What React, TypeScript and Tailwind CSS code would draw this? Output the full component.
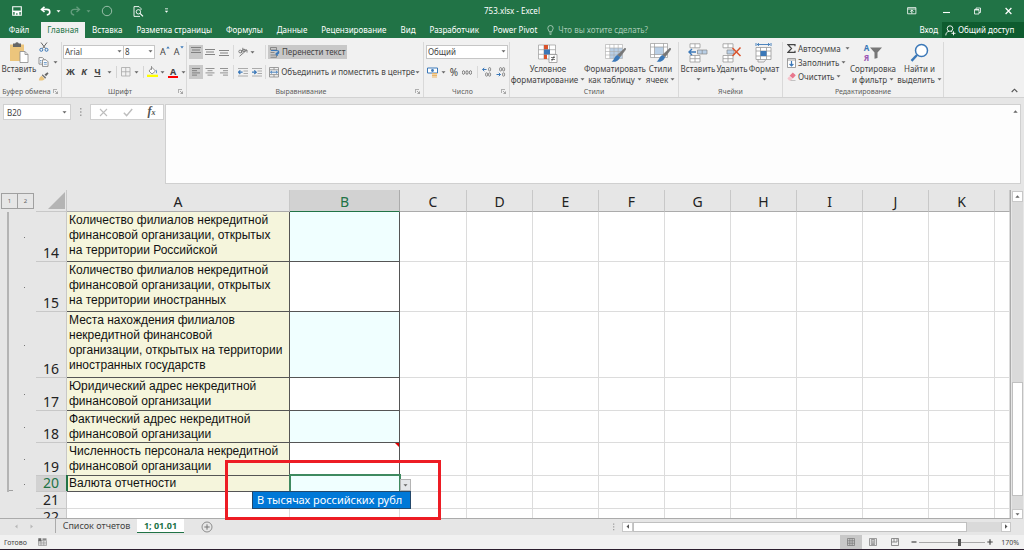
import React from "react";

type Kids = { children?: React.ReactNode };

function Svg({ w, h, className = "", children }: Kids & { w: number; h: number; className?: string }) {
  return (
    <svg width={w} height={h} viewBox={`0 0 ${w} ${h}`} fill="none" aria-hidden="true" className={`shrink-0 ${className}`}>
      {children}
    </svg>
  );
}

function Caret({ className = "text-[#666]" }: { className?: string }) {
  return (
    <Svg w={5} h={3} className={className}>
      <path d="M0.5 0.3h4L2.5 2.6z" fill="currentColor" />
    </Svg>
  );
}

/* ---------- Title bar ---------- */

function TitleBar() {
  return (
    <header className="grid h-[22px] shrink-0 grid-cols-[1fr_auto_1fr] items-center bg-[#217346] text-white">
      <div className="flex items-center pl-[12px]">
        <button aria-label="Сохранить" className="mr-[18px]">
          <Svg w={10} h={10}>
            <path d="M0.7 0.7h8.6v8.6H0.7z" stroke="#fff" strokeWidth="1.1" />
            <path d="M0.7 4.6h8.6v1.4H0.7z" fill="#fff" />
            <path d="M2.6 6h4.8v3.3H2.6z" fill="#fff" />
            <path d="M4.2 7.2h1.3v1.6H4.2z" fill="#217346" />
          </Svg>
        </button>
        <button aria-label="Отменить" className="mr-[4px]">
          <Svg w={12} h={10}>
            <path d="M4.5 0.8L1.5 3.4l3 2.6" stroke="#fff" strokeWidth="1.6" />
            <path d="M1.8 3.4h5c4 0 4 5 0 5.6" stroke="#fff" strokeWidth="1.6" />
          </Svg>
        </button>
        <Caret className="mr-[9px] text-white" />
        <button aria-label="Вернуть" className="mr-[5px] opacity-30">
          <Svg w={11} h={10}>
            <path d="M6.5 0.8l3 2.6-3 2.6" stroke="#fff" strokeWidth="1.3" />
            <path d="M9.2 3.4h-5c-4 0-4 5 0 5.6" stroke="#fff" strokeWidth="1.3" />
          </Svg>
        </button>
        <Caret className="mr-[10px] text-white/30" />
        <button aria-label="Фигура" className="mr-[20px]">
          <Svg w={12} h={12}>
            <circle cx="6" cy="6" r="4.7" stroke="#b5d0c0" strokeWidth="0.8" />
          </Svg>
        </button>
        <button aria-label="Предварительный просмотр" className="mr-[24px]">
          <Svg w={11} h={11}>
            <path d="M8 4V2.6L6 0.6H1v9.8h6" stroke="#fff" strokeWidth="0.9" />
            <circle cx="5.4" cy="5.8" r="2.2" stroke="#fff" strokeWidth="0.9" />
            <path d="M7 7.4l3 3" stroke="#fff" strokeWidth="1.3" />
          </Svg>
        </button>
        <button aria-label="Настройка панели" className="-ml-[4px]">
          <Svg w={5} h={6}>
            <path d="M1 0.8h3" stroke="#fff" strokeWidth="0.8" />
            <path d="M0.8 2.8h3.400L2.5 4.8z" fill="#fff" />
          </Svg>
        </button>
      </div>
      <h1 className="text-[8px] leading-[12px]">753.xlsx - Excel</h1>
      <div className="flex items-center justify-end pr-[12px]">
        <button aria-label="Параметры ленты" className="mr-[26px]">
          <Svg w={10} h={8}>
            <path d="M0.6 0.6h8.3v6.2H0.6zM0.6 2h8.3" stroke="#fff" strokeWidth="0.8" />
            <path d="M4.8 6.5V3M3.2 4.6L4.8 3l1.6 1.6" stroke="#fff" strokeWidth="0.9" />
          </Svg>
        </button>
        <button aria-label="Свернуть" className="mr-[24px]">
          <Svg w={7} h={8}>
            <path d="M0 5.500h7" stroke="#fff" strokeWidth="1.1" />
          </Svg>
        </button>
        <button aria-label="Восстановить" className="mr-[24px]">
          <Svg w={7} h={8}>
            <path d="M0.5 2.5h4.5v4.5H0.5zM2 2.5V1h4.5v4.5H5M0.5 3h4.5" stroke="#fff" strokeWidth="0.8" />
          </Svg>
        </button>
        <button aria-label="Закрыть">
          <Svg w={7} h={8}>
            <path d="M0.6 1l5.8 6M6.4 1L0.6 7" stroke="#fff" strokeWidth="1.2" />
          </Svg>
        </button>
      </div>
    </header>
  );
}

/* ---------- Ribbon tabs ---------- */

const TABS = ["Вставка", "Разметка страницы", "Формулы", "Данные", "Рецензирование", "Вид", "Разработчик", "Power Pivot"];

function RibbonTabs() {
  return (
    <nav className="flex h-[16px] shrink-0 items-stretch whitespace-nowrap bg-[#217346] text-[8px] leading-[16px] text-white">
      <button className="w-[41px] pr-[3px] text-center">Файл</button>
      <button className="w-[44px] bg-[#f1f1f1] text-center text-[#217346]">Главная</button>
      {TABS.map((t) => (
        <button key={t} className="px-[7px]">
          {t}
        </button>
      ))}
      <button className="ml-[3px] flex items-center gap-[4px] text-[#a5c9b4]">
        <Svg w={7} h={10}>
          <path d="M2.2 6.7C2 5.3 0.8 4.8 0.8 3.2a2.7 2.7 0 0 1 5.4 0c0 1.6-1.2 2.1-1.4 3.5zM2.3 8h2.4M2.6 9.3h1.8" stroke="#bcd8c7" strokeWidth="0.8" />
        </Svg>
        Что вы хотите сделать?
      </button>
      <button className="ml-auto mr-[4px]">Вход</button>
      <button className="flex w-[82px] items-center gap-[2px] bg-[#0e5c2f] pl-[3px]">
        <Svg w={11} h={11}>
          <circle cx="5" cy="3.6" r="2.8" stroke="#fff" strokeWidth="0.9" />
          <path d="M0.8 10.4c0-2.4 1.4-3.8 3.2-4.1M6.2 6.3l1 0.5M8.5 6.3v4M6.5 8.3h4" stroke="#fff" strokeWidth="0.9" />
        </Svg>
        Общий доступ
      </button>
    </nav>
  );
}

/* ---------- Ribbon ---------- */

function Group({ label, className, launcher = false, children }: Kids & { label: string; className: string; launcher?: boolean }) {
  return (
    <section className={`flex shrink-0 flex-col border-r border-[#d9d9d9] ${className}`}>
      <div className="h-[44px]">{children}</div>
      <div className="flex h-[11px] items-center">
        <h2 className="flex-1 whitespace-nowrap text-center text-[7px] leading-[11px] text-[#605e5c]">{label}</h2>
        {launcher && (
          <button aria-label={`Параметры: ${label}`} className="mr-[3px]">
            <Svg w={5} h={5}>
              <path d="M0.4 4V0.4H4M2 2l2.4 2.4M4.5 2.4v2.1H2.4" stroke="#777" strokeWidth="0.6" />
            </Svg>
          </button>
        )}
      </div>
    </section>
  );
}

function BigButton({ icon, lines, className, caretBelow = false }: { icon: React.ReactNode; lines: string[]; className: string; caretBelow?: boolean }) {
  return (
    <button className={`flex shrink-0 flex-col items-center whitespace-nowrap text-[8px] leading-[11px] text-[#444] ${className}`}>
      <span className="flex h-[21px] items-center">{icon}</span>
      {lines.map((l, i) => (
        <span key={l} className="flex items-center gap-[2px]">
          {l}
          {!caretBelow && i === lines.length - 1 && <Caret />}
        </span>
      ))}
      {caretBelow && <Caret className="mt-[4px] text-[#666]" />}
    </button>
  );
}

function AlignIcon({ widths, top = 1 }: { widths: [number, number, number]; top?: number }) {
  return (
    <Svg w={10} h={10}>
      {widths.map((n, i) => (
        <path key={i} d={`M${(10 - n) / 2} ${top + 0.5 + i * 2.5}h${n}`} stroke="#777" strokeWidth="0.9" />
      ))}
    </Svg>
  );
}

function IndentIcon({ flip = false }: { flip?: boolean }) {
  return (
    <Svg w={10} h={9}>
      <path d="M0 0.5h10M5.5 3h4.5M5.5 5.5h4.5M0 8h10" stroke="#999" strokeWidth="0.8" />
      <path d={flip ? "M0 4.2h4M2.3 2.4l1.9 1.8L2.3 6" : "M0.6 4.2h4M2.3 2.4L0.5 4.2 2.3 6"} stroke="#3b78b8" strokeWidth="1.3" />
    </Svg>
  );
}

function DecimalIcon({ up = false }: { up?: boolean }) {
  return (
    <Svg w={10} h={10}>
      <path d={up ? "M0.5 2.5h4M2.3 0.8L0.6 2.5l1.7 1.7" : "M0.5 7.5h4M2.8 5.8l1.7 1.7-1.7 1.7"} stroke="#3b78b8" strokeWidth="1" />
      <rect x="6.6" y="0.6" width="2" height="3.4" rx="1" stroke="#666" strokeWidth="0.7" />
      <rect x="6.6" y="5.8" width="2" height="3.4" rx="1" stroke="#666" strokeWidth="0.7" />
      {up ? <rect x="3.6" y="5.8" width="2" height="3.4" rx="1" stroke="#666" strokeWidth="0.7" /> : <rect x="3.6" y="0.6" width="2" height="3.4" rx="1" stroke="#666" strokeWidth="0.7" />}
    </Svg>
  );
}

function Drop({ label, value, className }: { label: string; value: string; className: string }) {
  return (
    <div className={`relative shrink-0 ${className}`}>
      <select aria-label={label} defaultValue={value} className="block h-[14px] w-full appearance-none border border-[#c6c6c6] bg-white pl-[1px] text-[8px] leading-[12px] text-[#444]">
        <option>{value}</option>
      </select>
      <span className="pointer-events-none absolute right-[2px] top-[5px]">
        <Caret />
      </span>
    </div>
  );
}

function Brush() {
  return (
    <>
      <path d="M20 5l1 1-6 8-2.5-2z" fill="#777" stroke="#777" strokeWidth="0.6" />
      <path d="M12.3 12l2.8 2.2c-1 3.6-4.6 5-8.6 4.6 2.6-1.4 2.6-5.4 5.8-6.800z" fill="#3b78b8" />
    </>
  );
}

function Ribbon() {
  return (
    <div className="flex h-[60px] shrink-0 overflow-hidden border-b border-[#d2d2d2] bg-[#f1f1f1] pt-[4px] text-[8px] text-[#444]">
      <Group label="Буфер обмена" className="w-[62px]" launcher>
        <div className="flex">
          <BigButton
            className="w-[38px]"
            caretBelow
            lines={["Вставить"]}
            icon={
              <Svg w={20} h={21}>
                <path d="M1 2.5h14V19H1z" fill="#ecc57c" />
                <path d="M4 1.500h2.200a2 2 0 0 1 3.600 0H12V5H4z" fill="#666" />
                <path d="M11 9.500h5l3 3v8h-8z" fill="#fff" stroke="#8a8a8a" strokeWidth="0.8" />
                <path d="M16 9.500v3h3" stroke="#8a8a8a" strokeWidth="0.8" />
              </Svg>
            }
          />
          <div className="flex flex-col gap-[5px]">
            <button aria-label="Вырезать" className="pl-[1px]">
              <Svg w={10} h={10}>
                <path d="M2 0.500l4.500 6M8 0.500l-4.500 6" stroke="#666" strokeWidth="1" />
                <circle cx="2.300" cy="7.800" r="1.500" stroke="#3b78b8" strokeWidth="1" />
                <circle cx="7.500" cy="7.800" r="1.500" stroke="#3b78b8" strokeWidth="1" />
              </Svg>
            </button>
            <button aria-label="Копировать" className="flex items-center gap-[4px]">
              <Svg w={11} h={10}>
                <path d="M1 0.600h3.500l1.500 1.500v5H1z" fill="#fff" stroke="#777" strokeWidth="0.800" />
                <path d="M4.500 2.800h3.500l2 2v4.600H4.500z" fill="#fff" stroke="#777" strokeWidth="0.800" />
                <path d="M5.800 5.500h3M5.800 7.200h3M2 3.500h1.500M2 5.200h1.500" stroke="#3b78b8" strokeWidth="0.700" />
              </Svg>
              <Caret />
            </button>
            <button aria-label="Формат по образцу">
              <Svg w={11} h={9}>
                <path d="M6.500 2.500L9.500 0.300l1 1.200-2.500 2.700z" fill="#666" />
                <path d="M4.500 2.300l3.700 3.200-1 1.200L3.800 3.500z" fill="#777" />
                <path d="M3.500 3.800l3.200 3.200C5.500 8.600 3 8.700 0.800 8.300 1 6.500 2 5 3.500 3.800z" fill="#ecc57c" />
              </Svg>
            </button>
          </div>
        </div>
      </Group>

      <Group label="Шрифт" className="w-[125px]" launcher>
        <div className="flex h-[20px] items-center pl-[1px]">
          <Drop label="Шрифт" value="Arial" className="w-[61px]" />
          <Drop label="Размер шрифта" value="8" className="-ml-px w-[32px]" />
          <button aria-label="Увеличить шрифт" className="ml-[5px] flex text-[9px] leading-[14px]">
            А
            <Svg w={4} h={3} className="mt-[1px]">
              <path d="M0.300 2.500h3.400L2 0.300z" fill="#3b78b8" />
            </Svg>
          </button>
          <button aria-label="Уменьшить шрифт" className="ml-[4px] flex text-[9px] leading-[14px]">
            А
            <Svg w={4} h={3} className="mt-[1px]">
              <path d="M0.300 0.300h3.400L2 2.500z" fill="#3b78b8" />
            </Svg>
          </button>
        </div>
        <div className="flex h-[20px] items-center pl-[4px] text-[9px] font-bold leading-[14px]">
          <button className="w-[9px]">Ж</button>
          <button className="ml-[5px] w-[8px] italic">К</button>
          <button className="ml-[6px] w-[7px] underline">Ч</button>
          <Caret className="ml-[6px] text-[#666]" />
          <span className="ml-[4px] h-[12px] w-px bg-[#d4d4d4]" />
          <button aria-label="Границы" className="ml-[4px]">
            <Svg w={10} h={10}>
              <path d="M0.500 0.500h8.500v8.500H0.500zM4.750 0.500V9M0.500 4.750H9" stroke="#a8a8a8" strokeWidth="0.800" />
            </Svg>
          </button>
          <Caret className="ml-[3px] text-[#666]" />
          <span className="ml-[4px] h-[12px] w-px bg-[#d4d4d4]" />
          <button aria-label="Цвет заливки" className="ml-[3px]">
            <Svg w={11} h={12}>
              <path d="M0 8.700h11V11H0z" fill="#ffff00" />
              <path d="M5 1.500l3.500 3.500-3.500 3-3-3z" fill="#fff" stroke="#777" strokeWidth="0.800" />
              <path d="M4.500 0v4" stroke="#777" strokeWidth="0.700" />
              <path d="M9 3.500c1.300 1.600 1.300 3.500 0.300 4z" fill="#3b78b8" />
            </Svg>
          </button>
          <Caret className="ml-[2px] text-[#666]" />
          <button aria-label="Цвет текста" className="ml-[3px] flex flex-col items-center">
            <span className="h-[9px] text-[9px] leading-[9px]">А</span>
            <span className="h-[2px] w-[10px] bg-[#ff0000]" />
          </button>
          <Caret className="ml-[3px] text-[#666]" />
        </div>
      </Group>

      <Group label="Выравнивание" className="w-[237px]" launcher>
        <div className="flex h-[20px] items-center pl-[2px]">
          <button aria-label="По верхнему краю" className="bg-[#c8c8c8] px-[2px] py-[2px]">
            <AlignIcon widths={[10, 8, 10]} top={0} />
          </button>
          <button aria-label="По середине" className="ml-[2px]">
            <AlignIcon widths={[10, 8, 10]} top={2} />
          </button>
          <button aria-label="По нижнему краю" className="ml-[4px]">
            <AlignIcon widths={[10, 8, 10]} top={3} />
          </button>
          <span className="ml-[4px] h-[14px] w-px bg-[#d9d9d9]" />
          <button aria-label="Ориентация" className="ml-[4px] flex items-center gap-[2px]">
            <Svg w={10} h={10}>
              <circle cx="2.200" cy="4.500" r="1.400" stroke="#666" strokeWidth="0.800" />
              <path d="M3.800 3v3.200M4.800 0.800v3.500M1.500 9.300L8.800 3M6.200 3h2.800v2.600" stroke="#666" strokeWidth="0.800" />
              <circle cx="6" cy="3.400" r="1.200" stroke="#666" strokeWidth="0.800" />
            </Svg>
            <Caret />
          </button>
          <span className="ml-[10px] h-[14px] w-px bg-[#d9d9d9]" />
          <button className="ml-[2px] flex h-[14px] items-center gap-[2px] whitespace-nowrap bg-[#c8c8c8] pl-[2px] pr-[2px] leading-[14px]">
            <Svg w={10} h={11}>
              <path d="M0.500 0.500h6v2.500h-6zM0.500 8h6v2.300h-6M0.500 5.500h4" stroke="#777" strokeWidth="0.800" />
              <path d="M1 3.500h5.500c3 0 3 3.200 0 3.400M7.800 5.200L6 6.900l1.800 1.700" stroke="#3b78b8" strokeWidth="1.200" />
            </Svg>
            Перенести текст
          </button>
        </div>
        <div className="flex h-[20px] items-center pl-[2px]">
          <button aria-label="По левому краю" className="bg-[#c8c8c8] px-[2px] py-[2px]">
            <Svg w={10} h={10}>
              <path d="M1 1.500h8M1 3.700h5M1 5.900h8M1 8.100h5" stroke="#777" strokeWidth="0.900" />
            </Svg>
          </button>
          <button aria-label="По центру" className="ml-[2px]">
            <Svg w={10} h={10}>
              <path d="M0.500 1.500h9M2.500 3.700h5M0.500 5.900h9M2.500 8.100h5" stroke="#888" strokeWidth="0.900" />
            </Svg>
          </button>
          <button aria-label="По правому краю" className="ml-[4px]">
            <Svg w={10} h={10}>
              <path d="M1 1.500h8M4 3.700h5M1 5.900h8M4 8.100h5" stroke="#888" strokeWidth="0.900" />
            </Svg>
          </button>
          <span className="ml-[4px] h-[14px] w-px bg-[#d9d9d9]" />
          <button aria-label="Уменьшить отступ" className="ml-[4px]">
            <IndentIcon />
          </button>
          <button aria-label="Увеличить отступ" className="ml-[4px]">
            <IndentIcon flip />
          </button>
          <span className="ml-[3px] h-[14px] w-px bg-[#d9d9d9]" />
          <button className="ml-[4px] flex items-center gap-[2px] whitespace-nowrap leading-[14px]">
            <Svg w={10} h={11}>
              <path d="M0.500 0.500h9v9.500h-9zM0.500 2.800h9M0.500 7.600h9M5 0.500v2.300M5 7.600v2.400" stroke="#888" strokeWidth="0.800" />
              <path d="M1.500 5.200h7M3 3.900L1.500 5.200 3 6.500M7 3.900l1.500 1.300L7 6.500" stroke="#3b78b8" strokeWidth="0.900" />
            </Svg>
            Объединить и поместить в центре
          </button>
          <Caret className="ml-auto mr-[3px] text-[#666]" />
        </div>
      </Group>

      <Group label="Число" className="w-[86px]" launcher>
        <div className="flex h-[20px] items-center pl-[2px]">
          <Drop label="Числовой формат" value="Общий" className="w-[82px]" />
        </div>
        <div className="flex h-[20px] items-center pl-[3px] leading-[14px]">
          <button aria-label="Финансовый формат">
            <Svg w={11} h={11}>
              <path d="M0.500 1h10v5h-10z" fill="#fff" stroke="#3b78b8" strokeWidth="1" />
              <circle cx="5.500" cy="3.500" r="1.400" fill="#3b78b8" />
              <path d="M5 6h5v1.200H5zM5 7.700h5v1.200H5zM5 9.400h5v1.200H5z" fill="#ecb667" />
            </Svg>
          </button>
          <Caret className="ml-[3px] text-[#666]" />
          <button className="ml-[3px] w-[10px] text-[10px]">%</button>
          <button aria-label="Формат с разделителями" className="ml-[3px]">
            <Svg w={10} h={5}>
              {[1.5, 5, 8.5].map((x) => (
                <ellipse key={x} cx={x} cy="2.500" rx="1.100" ry="1.900" stroke="#666" strokeWidth="0.800" />
              ))}
            </Svg>
          </button>
          <span className="ml-[5px] h-[12px] w-px bg-[#d9d9d9]" />
          <button aria-label="Увеличить разрядность" className="ml-[4px]">
            <DecimalIcon up />
          </button>
          <button aria-label="Уменьшить разрядность" className="ml-[4px]">
            <DecimalIcon />
          </button>
        </div>
      </Group>

      <Group label="Стили" className="w-[169px]">
        <div className="flex">
          <BigButton
            className="w-[76px]"
            lines={["Условное", "форматирование"]}
            icon={
              <Svg w={20} h={20}>
                <path d="M0.500 2h17v14h-17zM0.500 6.700h17M0.500 11.300h17M6 2v14M11.500 2v14" stroke="#999" strokeWidth="0.700" fill="#fff" />
                <path d="M6 2h4v4.500H6zM6 11.500h3V16H6z" fill="#d9532c" />
                <path d="M6 6.500h6v5H6z" fill="#3b78b8" />
                <path d="M11 11.500h8v8h-8z" fill="#fff" stroke="#888" strokeWidth="0.700" />
                <path d="M13 14.500h4M13 16.500h4M16.300 12.800l-2.600 5.400" stroke="#444" strokeWidth="0.700" />
              </Svg>
            }
          />
          <BigButton
            className="w-[58px]"
            lines={["Форматировать", "как таблицу"]}
            icon={
              <Svg w={21} h={20}>
                <path d="M0.500 1.500h17v14h-17z" fill="#fff" />
                <path d="M5 5h12.500v10.500H5z" fill="#b9cfe6" />
                <path d="M0.500 1.500h17v14h-17zM0.500 5h17M0.500 8.500h17M0.500 12h17M4.700 1.500v14M9 1.500v14M13.200 1.500v14" stroke="#aaa" strokeWidth="0.600" />
                <Brush />
              </Svg>
            }
          />
          <BigButton
            className="w-[33px]"
            lines={["Стили", "ячеек"]}
            icon={
              <Svg w={21} h={20}>
                <path d="M0.500 0.500h17v14h-17z" fill="#fff" />
                <path d="M4.500 4h9v7.500h-9z" fill="#b9cfe6" />
                <path d="M0.500 0.500h17v14h-17zM0.500 4h17M0.500 11.500h17M4.500 0.500v14M13.500 0.500v14" stroke="#999" strokeWidth="0.700" />
                <Brush />
              </Svg>
            }
          />
        </div>
      </Group>

      <Group label="Ячейки" className="w-[104px]">
        <div className="flex pl-[1px]">
          <BigButton
            className="w-[36px]"
            caretBelow
            lines={["Вставить"]}
            icon={
              <Svg w={20} h={20}>
                <path d="M2 0.800h10v4H2zM7 0.800v4M2 12.500h10v6.500H2zM7 12.500V19M2 15.700h10" stroke="#999" strokeWidth="0.800" fill="#fff" />
                <path d="M9.500 7h9.500v4H9.500zM14.200 7v4" stroke="#888" strokeWidth="0.700" fill="#b9cfe6" />
                <path d="M1 9h7M4 6L1 9l3 3" stroke="#3b78b8" strokeWidth="1.400" />
              </Svg>
            }
          />
          <BigButton
            className="w-[32px]"
            caretBelow
            lines={["Удалить"]}
            icon={
              <Svg w={20} h={20}>
                <path d="M1 0.800h10v4H1zM6 0.800v4M1 12.500h10v6.500H1zM6 12.500V19M1 15.700h10" stroke="#999" strokeWidth="0.800" fill="#fff" />
                <path d="M5 7h7v4H5z" stroke="#888" strokeWidth="0.700" fill="#b9cfe6" />
                <path d="M10.500 5l8 8M18.500 4.500l-8 8.500" stroke="#d9532c" strokeWidth="1.500" />
              </Svg>
            }
          />
          <BigButton
            className="w-[32px]"
            caretBelow
            lines={["Формат"]}
            icon={
              <Svg w={18} h={20}>
                <path d="M1 4.500h15v12H1zM1 8h15M1 13h15M5.500 4.500v12M11.500 4.500v12" stroke="#999" strokeWidth="0.800" fill="#fff" />
                <path d="M5.500 8h6v5h-6z" fill="#3b78b8" />
                <path d="M1 0v3M16 0v3M2 1.500h13M4 0.200L2.300 1.500 4 2.800M13 0.200l1.700 1.300L13 2.800" stroke="#3b78b8" strokeWidth="0.900" />
                <path d="M3 16.500v2.500h6l2-2.500" stroke="#999" strokeWidth="0.800" />
              </Svg>
            }
          />
        </div>
      </Group>

      <Group label="Редактирование" className="w-[161px]">
        <div className="flex">
          <div className="flex w-[65px] flex-col gap-[1px] whitespace-nowrap pl-[4px] leading-[12px]">
            <button className="flex h-[13px] items-center gap-[2px]">
              <Svg w={9} h={9}>
                <path d="M8 2.200V0.700H1L4.500 4.500 1 8.300h7V6.800" stroke="#444" strokeWidth="1.200" />
              </Svg>
              Автосумма
              <Caret className="ml-[2px] text-[#666]" />
            </button>
            <button className="flex h-[13px] items-center gap-[2px]">
              <Svg w={9} h={10}>
                <path d="M0.500 0.500h8v9h-8zM0.500 2h8" stroke="#888" strokeWidth="0.800" fill="#fff" />
                <path d="M4.500 3v5M2.600 6l1.900 2 1.900-2" stroke="#3b78b8" strokeWidth="1.200" />
              </Svg>
              Заполнить
              <Caret />
            </button>
            <button className="flex h-[13px] items-center gap-[2px]">
              <Svg w={9} h={9}>
                <path d="M5.800 0.500L8.800 3.200 5.800 6.500 2.600 3.800z" fill="#e8778c" />
                <path d="M2.300 4.200l3.100 2.700-1.500 1.500H2L0.400 6.600z" fill="#f6c3cc" />
                <path d="M3.500 8.600h5" stroke="#999" strokeWidth="0.600" />
              </Svg>
              Очистить
              <Caret />
            </button>
          </div>
          <BigButton
            className="w-[50px]"
            lines={["Сортировка", "и фильтр"]}
            icon={
              <span className="flex items-center">
                <span className="flex flex-col text-[8px] font-bold leading-[10px]">
                  <span className="text-[#3b78b8]">А</span>
                  <span className="text-[#9a57b5]">Я</span>
                </span>
                <Svg w={12} h={12} className="ml-[1px]">
                  <path d="M0 0.500h12L7.500 5.500V11L4.500 11.700V5.500z" fill="#777" />
                </Svg>
              </span>
            }
          />
          <BigButton
            className="w-[43px]"
            lines={["Найти и", "выделить"]}
            icon={
              <Svg w={19} h={20}>
                <circle cx="11.500" cy="7.500" r="6" fill="#fff" stroke="#3b78b8" strokeWidth="1.500" />
                <path d="M7 12L1.500 17.800" stroke="#3b78b8" strokeWidth="2.400" />
              </Svg>
            }
          />
        </div>
      </Group>
      <button aria-label="Свернуть ленту" className="mb-[4px] ml-auto mr-[6px] self-end">
        <Svg w={7} h={5}>
          <path d="M0.700 4L3.500 1.200 6.300 4" stroke="#555" strokeWidth="1.100" />
        </Svg>
      </button>
    </div>
  );
}

/* ---------- Formula bar ---------- */

function FormulaBar() {
  return (
    <div className="flex h-[92px] shrink-0 items-start bg-[#e6e6e6] pb-[6px] pl-[3px] pr-[3px] pt-[6px]">
      <div className="relative w-[68px]">
        <input aria-label="Имя ячейки" defaultValue="B20" className="block h-[16px] w-full border border-[#d0d0d0] bg-white pl-[3px] text-[8px] leading-[14px] text-[#444]" />
        <span className="pointer-events-none absolute right-[4px] top-[7px]">
          <Caret />
        </span>
      </div>
      <Svg w={2} h={16} className="ml-[9px]">
        <path d="M0 4h1.500v1.500H0zM0 7.300h1.500v1.500H0zM0 10.600h1.500v1.500H0z" fill="#a0a0a0" />
      </Svg>
      <div className="ml-[8px] flex h-[16px] w-[74px] items-center justify-around border border-[#d0d0d0] bg-white">
        <button aria-label="Отмена">
          <Svg w={9} h={9}>
            <path d="M1 1l7 7M8 1L1 8" stroke="#bdbdbd" strokeWidth="1.100" />
          </Svg>
        </button>
        <button aria-label="Ввод">
          <Svg w={10} h={9}>
            <path d="M0.800 4.800l2.800 2.800L9.200 1" stroke="#bdbdbd" strokeWidth="1.400" />
          </Svg>
        </button>
        <button className="font-['Liberation_Serif',serif] text-[12px] font-bold italic leading-[13px] text-[#555]">
          f<span className="text-[8px]">x</span>
        </button>
      </div>
      <div className="relative ml-[1px] h-full flex-1">
        <textarea aria-label="Строка формул" className="block h-full w-full resize-none border border-[#d0d0d0] bg-[#fdfdfd]" />
        <Svg w={5} h={3} className="absolute right-[3px] top-[6px]">
          <path d="M0.300 2.800h4.400L2.500 0.300z" fill="#666" />
        </Svg>
      </div>
    </div>
  );
}

/* ---------- Sheet ---------- */

const COLUMNS = ["A", "B", "C", "D", "E", "F", "G", "H", "I", "J", "K", ""];

type Row = { n: number; h: string; lines?: string[]; tint?: boolean };

const ROWS: Row[] = [
  { n: 14, h: "h-[50px]", tint: true, lines: ["Количество филиалов некредитной", "финансовой организации, открытых", "на территории Российской"] },
  { n: 15, h: "h-[50px]", lines: ["Количество филиалов некредитной", "финансовой организации, открытых", "на территории иностранных"] },
  { n: 16, h: "h-[66px]", tint: true, lines: ["Места нахождения филиалов", "некредитной финансовой", "организации, открытых на территории", "иностранных государств"] },
  { n: 17, h: "h-[33px]", lines: ["Юридический адрес некредитной", "финансовой организации"] },
  { n: 18, h: "h-[32px]", tint: true, lines: ["Фактический адрес некредитной", "финансовой организации"] },
  { n: 19, h: "h-[33px]", lines: ["Численность персонала некредитной", "финансовой организации"] },
  { n: 20, h: "h-[16px]", tint: true, lines: ["Валюта отчетности"] },
  { n: 21, h: "h-[17px]" },
  { n: 22, h: "h-[17px]" },
];

function SheetRow({ row }: { row: Row }) {
  const active = row.n === 20;
  const filled = Boolean(row.lines);
  return (
    <tr className={row.h}>
      <td className="bg-[#e6e6e6] p-0">
        {filled && (
          <div className={`ml-[7px] flex items-center border-l-2 border-[#b4b4b4] ${row.h}`}>
            <span className="ml-[15px] h-px w-px bg-[#777]" />
            {active && <span className="-ml-[16px] mb-px h-px w-[4px] self-end bg-[#a0a0a0]" />}
          </div>
        )}
      </td>
      <th
        scope="row"
        className={`border-b border-r border-[#c8c8c8] p-0 text-right align-bottom font-normal ${active ? "bg-[#d2d2d2] text-[#217346]" : "bg-[#e6e6e6] text-[#222]"}`}
      >
        <div className="h-[15px] pr-[7px] text-[14px] leading-[14px]">{row.n}</div>
      </th>
      <td className={`border-b border-r p-0 align-top ${filled ? "border-[#555] bg-[#f5f5dc]" : "border-[#dcdcdc]"}`}>
        {filled && (
          <div className={`overflow-hidden whitespace-nowrap pl-[2px] ${active ? "h-[15px]" : "pt-px"}`}>
            {row.lines!.map((l) => (
              <div key={l} className="font-['Liberation_Sans',Arial,sans-serif] text-[12px] leading-[15px] text-[#111]">
                {l}
              </div>
            ))}
          </div>
        )}
      </td>
      <td className={`border-b border-r p-0 ${filled ? "border-[#555]" : "border-[#dcdcdc]"} ${row.tint ? "bg-[#f0ffff]" : "bg-white"}`}>
        {row.n === 19 && (
          <Svg w={4} h={4} className="mb-[28px] ml-auto">
            <path d="M0 0h4v4z" fill="#e00000" />
          </Svg>
        )}
      </td>
      {COLUMNS.slice(2).map((c, i) => (
        <td key={c + i} className="border-b border-r border-[#dcdcdc] p-0" />
      ))}
    </tr>
  );
}

function Sheet() {
  return (
    <main className="relative flex min-h-0 flex-1 bg-[#e6e6e6]">
      <div className="min-w-0 flex-1 overflow-hidden border-b border-r border-[#ababab] bg-white">
        <table className="w-full table-fixed border-separate border-spacing-0">
          <colgroup>
            <col className="w-[36px]" />
            <col className="w-[31px]" />
            <col className="w-[223px]" />
            <col className="w-[110px]" />
            <col className="w-[67px]" />
            {COLUMNS.slice(3, 11).map((c) => (
              <col key={c} className="w-[66px]" />
            ))}
            <col />
          </colgroup>
          <thead>
            <tr className="h-[22px] bg-[#e6e6e6]">
              <td className="p-0">
                <div className="ml-[1px] flex w-[33px] border border-[#a0a0a0] text-[6px] leading-[14px] text-[#666]">
                  <button className="flex-1 border-r border-[#a0a0a0]">1</button>
                  <button className="flex-1">2</button>
                </div>
              </td>
              <td className="border-b border-r border-[#c8c8c8] p-0">
                <Svg w={17} h={17} className="ml-auto mr-[1px]">
                  <path d="M17 0v17H0z" fill="#b4b4b4" />
                </Svg>
              </td>
              {COLUMNS.map((c) => (
                <th
                  key={c}
                  scope="col"
                  className={`border-b border-r p-0 pt-[2px] text-center text-[14px] font-normal leading-[18px] ${
                    c === "B" ? "border-b-[#217346] border-r-[#ababab] bg-[#d2d2d2] text-[#217346]" : "border-b-[#ababab] border-r-[#c8c8c8] text-[#222]"
                  }`}
                >
                  {c}
                </th>
              ))}
            </tr>
          </thead>
          <tbody>
            {ROWS.map((r) => (
              <SheetRow key={r.n} row={r} />
            ))}
          </tbody>
        </table>
      </div>

      <div className="flex w-[13px] shrink-0 flex-col bg-[#e6e6e6] px-[1px] pt-[1px]">
        <button aria-label="Вверх" className="flex h-[11px] shrink-0 items-center justify-center border border-[#c8c8c8] bg-white">
          <Svg w={5} h={3}>
            <path d="M0.300 2.800h4.400L2.500 0.300z" fill="#666" />
          </Svg>
        </button>
        <div className="flex flex-1 flex-col bg-[#dadada]">
          <div className="flex-[181]" />
          <div className="flex-[113] border border-[#c0c0c0] bg-white" />
          <div className="flex-[13]" />
        </div>
        <button aria-label="Вниз" className="flex h-[10px] shrink-0 items-center justify-center border border-[#c8c8c8] bg-white">
          <Caret />
        </button>
      </div>

      {/* Selection outline, validation list and the highlight frame float over the grid */}
      <div className="pointer-events-none absolute left-[289px] top-[284px] h-[18px] w-[112px] border-2 border-b-0 border-[#3f8a60]" />
      <div className="absolute left-[66px] top-[285px] h-[16px] w-[2px] bg-[#217346]" />
      <button aria-label="Открыть список" className="absolute left-[400px] top-[289px] flex h-[12px] w-[11px] items-center justify-center border border-[#b4b4b4] bg-[#e4e6ea]">
        <Caret />
      </button>
      <ul role="listbox" className="absolute left-[252px] top-[301px] h-[18px] w-[159px] overflow-hidden border border-[#24486b] bg-[#0078d7] pl-[4px]">
        <li role="option" aria-selected="true" className="whitespace-nowrap text-[11px] leading-[16px] text-white">
          В тысячах российских рубл
        </li>
      </ul>
      <div className="pointer-events-none absolute left-[225px] top-[270px] z-10 h-[60px] w-[216px] border-[3px] border-[#ed1c24]" />
    </main>
  );
}

/* ---------- Sheet tabs and status bar ---------- */

function SheetTabs() {
  return (
    <div className="flex h-[16px] shrink-0 items-start bg-[#e6e6e6] text-[9px] leading-[13px] text-[#444]">
      <div className="flex h-[14px] w-[56px] items-center gap-[10px] border-r border-[#ababab] pl-[14px]">
        <button aria-label="Предыдущий лист">
          <Svg w={5} h={5}>
            <path d="M3.500 0.500v4L1 2.500z" fill="#b8b8b8" />
          </Svg>
        </button>
        <button aria-label="Следующий лист">
          <Svg w={5} h={5}>
            <path d="M1.500 0.500v4L4 2.500z" fill="#b8b8b8" />
          </Svg>
        </button>
      </div>
      <button className="w-[81px] whitespace-nowrap text-center">Список отчетов</button>
      <button className="h-[14px] w-[47px] whitespace-nowrap border-b border-[#217346] bg-white text-center font-bold text-[#217346]">1; 01.01</button>
      <button aria-label="Новый лист" className="ml-[17px] mt-[2px]">
        <Svg w={12} h={12}>
          <circle cx="6" cy="6" r="5" stroke="#777" strokeWidth="0.800" />
          <path d="M6 3.300v5.400M3.300 6h5.400" stroke="#777" strokeWidth="1" />
        </Svg>
      </button>
      <div className="ml-auto mr-[13px] mt-[2px] flex h-[11px] w-[398px] items-center">
        <Svg w={2} h={8} className="mr-[7px]">
          <path d="M0 0.500h1.300v1.300H0zM0 3.200h1.300v1.300H0zM0 5.900h1.300v1.300H0z" fill="#a0a0a0" />
        </Svg>
        <button aria-label="Влево" className="flex h-[10px] w-[11px] items-center justify-center border border-[#c8c8c8] bg-white">
          <Svg w={4} h={5}>
            <path d="M3 0.300v4.400L0.500 2.500z" fill="#555" />
          </Svg>
        </button>
        <div className="flex h-[10px] flex-1 bg-[#dadada]">
          <div className="flex-[334] border border-[#c0c0c0] bg-white" />
          <div className="flex-[34]" />
        </div>
        <button aria-label="Вправо" className="flex h-[10px] w-[10px] items-center justify-center border border-[#c8c8c8] bg-white">
          <Svg w={4} h={5}>
            <path d="M1 0.300v4.400L3.500 2.500z" fill="#555" />
          </Svg>
        </button>
      </div>
    </div>
  );
}

function StatusBar() {
  return (
    <footer className="flex h-[15px] shrink-0 items-center border-b border-[#2b1d2e] bg-[#f1f1f1] pl-[4px] pr-[5px] text-[7px] leading-[13px] text-[#444]">
      <span>Готово</span>
      <Svg w={9} h={8} className="ml-[11px]">
        <path d="M0.500 2.500h8v5h-8zM0.500 4.200h8M0.500 5.900h8M3 2.500v5M5.800 2.500v5" stroke="#888" strokeWidth="0.600" />
        <path d="M0.300 0.300h3v3h-3zM4.500 0.500h4v1.300h-4z" fill="#666" />
      </Svg>
      <div className="ml-auto flex h-full items-center">
        <button aria-label="Обычный" className="flex h-full w-[22px] items-center justify-center bg-[#c8c8c8]">
          <Svg w={8} h={8}>
            <path d="M0.500 0.500h7v7h-7zM0.500 2.800h7M0.500 5.200h7M2.800 0.500v7M5.200 0.500v7" stroke="#777" strokeWidth="0.700" />
          </Svg>
        </button>
        <button aria-label="Разметка страницы" className="flex w-[22px] justify-center">
          <Svg w={8} h={8}>
            <path d="M0.500 0.500h7v7h-7zM2.300 1.500h3.400v5H2.300zM3 3h2M3 4.200h2M3 5.400h2" stroke="#777" strokeWidth="0.700" />
          </Svg>
        </button>
        <button aria-label="Страничный режим" className="flex w-[22px] justify-center">
          <Svg w={8} h={8}>
            <path d="M0.500 0.500h7v7h-7zM0.500 4h5.500V0.500M3 0.500V4" stroke="#777" strokeWidth="0.800" />
          </Svg>
        </button>
        <button aria-label="Уменьшить масштаб" className="ml-[5px]">
          <Svg w={6} h={6}>
            <path d="M0.500 3h5" stroke="#444" strokeWidth="1.200" />
          </Svg>
        </button>
        <input
          type="range"
          aria-label="Масштаб"
          min={0}
          max={100}
          defaultValue={62}
          className="mx-[2px] h-[9px] w-[66px] appearance-none bg-[linear-gradient(#a8a8a8,#a8a8a8)] bg-[length:100%_1px] bg-center bg-no-repeat [&::-webkit-slider-thumb]:h-[7px] [&::-webkit-slider-thumb]:w-[3px] [&::-webkit-slider-thumb]:appearance-none [&::-webkit-slider-thumb]:bg-[#555]"
        />
        <button aria-label="Увеличить масштаб">
          <Svg w={6} h={6}>
            <path d="M0.300 3h5.400M3 0.300v5.400" stroke="#444" strokeWidth="1.200" />
          </Svg>
        </button>
        <span className="ml-[8px]">170%</span>
      </div>
    </footer>
  );
}

export default function App() {
  return (
    <div className="flex h-screen w-full flex-col overflow-hidden bg-[#e6e6e6] font-['Noto_Sans','Open_Sans',sans-serif]">
      <TitleBar />
      <RibbonTabs />
      <Ribbon />
      <FormulaBar />
      <Sheet />
      <SheetTabs />
      <StatusBar />
    </div>
  );
}
